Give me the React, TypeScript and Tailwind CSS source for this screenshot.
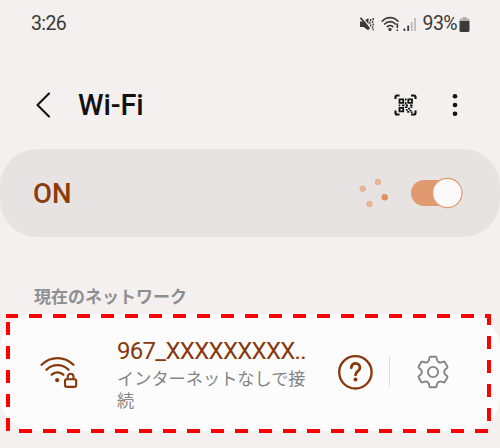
function StatusBar() {
  return (
    <div className="flex h-[48px] items-center pl-[31px] pr-[30px] text-[#3a3a3a]">
      <span className="text-[19.5px] leading-[22px] tracking-[-0.6px]">3:26</span>
      <div className="ml-auto flex items-center">
        {/* Muted, vibrating */}
        <svg className="mr-[6px]" width="16" height="16" viewBox="0 0 16 16" fill="none">
          <path d="M1 5.500h3L9.500 2v12.500L4.500 11H1z" fill="currentColor" />
          <path d="M3.200 1.500l7.500 9" stroke="#f3f0ef" strokeWidth="1.300" />
          <path d="M1.500 1.800l9 11.200" stroke="currentColor" strokeWidth="1.800" />
          <path d="M11.600 3v2M10.900 5.800v2M11.600 8.600v2M14.200 2v2M13.600 4.800v2M14.200 7.600v2M13.600 10.400v2M14.200 13v1.200" stroke="currentColor" strokeWidth="1.400" />
        </svg>
        <svg className="mr-[4px]" width="18" height="16" viewBox="0 0 18 16" fill="none" stroke="currentColor" strokeWidth="1.700" strokeLinecap="round">
          <path d="M1.200 5.200c4.300-4.700 11.400-4.700 15.700 0M3.700 8c3-3.200 7.700-3.200 10.700 0M6.400 10.700c1.500-1.500 3.800-1.500 5.300 0" />
          <circle cx="9" cy="13.400" r=".8" fill="currentColor" />
          <path d="M16.300 8.200v3M16.300 14v.2" />
        </svg>
        <svg className="mr-[6px]" width="14" height="16" viewBox="0 0 14 16" fill="currentColor">
          <path d="M.5 12.500h1.800V15H.5zM4.300 9.500h1.800V15H4.300z" />
          <path d="M7.900 6h1.700v9H7.900zM11.200 2h1.700v13h-1.700z" opacity=".3" />
        </svg>
        <span className="text-[19.5px] leading-[22px] tracking-[-0.6px]">93%</span>
        <svg className="ml-[2px] mt-px" width="11" height="16" viewBox="0 0 11 16" fill="currentColor">
          <path d="M3.500 0h4v1.500H9Q10.500 1.500 10.500 3v1H.5V3Q.5 1.500 2 1.500h1.500z" opacity=".35" />
          <path d="M.5 4h10v9.500q0 1.500-1.500 1.500H2Q.5 15 .5 13.500z" />
        </svg>
      </div>
    </div>
  );
}

function QrIcon() {
  return (
    <svg width="23" height="22" viewBox="0 0 23 22" fill="none" stroke="currentColor">
      <path d="M1.500 5V3q0-1.500 1.500-1.500h2.500M17 1.500h3q1.500 0 1.500 1.500v2M1.500 16.500v2.500q0 1.500 1.500 1.500h2.500M17 20.500h3q1.500 0 1.500-1.500v-2.500" strokeWidth="2.100" />
      <path d="M5.500 5.300h3.700v3.500H5.500zM14.300 5.300H18v3.500h-3.700zM5.500 13.800h3.700v3.500H5.500z" strokeWidth="1.800" />
      <path d="M11.700 4.500v2M11.700 8v2.500M4.700 11.400h1.600M8 11.400h2.500M12 11.400h2M16 11.400h2.500M11 13.200h2.500M14 14.600h2M16.500 13.200h1.800M11.800 16h2M15.500 16.500h2M13.200 17.900h2M16.700 18.200h1.800" strokeWidth="1.600" />
    </svg>
  );
}

function Header() {
  return (
    <header className="flex h-[101px] items-center pl-[36px] pr-[42px] pt-[12px] text-[#111]">
      <svg width="14" height="26" viewBox="0 0 14 26" fill="none" stroke="currentColor" strokeWidth="2.100" strokeLinecap="round" strokeLinejoin="round">
        <path d="M13 1.500L1.500 13 13 24.500" />
      </svg>
      <h1 className="ml-[28px] mt-px text-[29px] font-medium leading-[34px] tracking-[-0.1px]">Wi-Fi</h1>
      <div className="ml-auto flex items-center gap-[35px]">
        <QrIcon />
        <svg width="6" height="24" viewBox="0 0 6 24" fill="currentColor">
          <circle cx="3" cy="3.200" r="2.300" />
          <circle cx="3" cy="12" r="2.300" />
          <circle cx="3" cy="20.800" r="2.300" />
        </svg>
      </div>
    </header>
  );
}

function WifiToggle() {
  return (
    <div className="flex h-[88px] items-center rounded-[37px] bg-[#e7e3e2] pl-[33px] pr-[37px]">
      <span className="mt-[2px] text-[27.5px] font-medium leading-[32px] text-[#8c3b0c]">ON</span>
      <svg className="ml-auto" width="30" height="30" viewBox="0 0 30 30" fill="#e5b599">
        <circle cx="3.700" cy="10.800" r="3.200" />
        <circle cx="19" cy="4" r="3.200" />
        <circle cx="10.500" cy="26" r="3.200" />
        <circle cx="25.700" cy="19.300" r="3.200" fill="#e08f63" />
      </svg>
      <svg className="ml-[22px]" width="52" height="32" viewBox="0 0 52 32">
        <rect y="3" width="48" height="26" rx="13" fill="#e19a70" />
        <circle cx="36.300" cy="16" r="14.700" fill="#fbfaf9" stroke="#e19a70" strokeWidth="1.200" />
      </svg>
    </div>
  );
}

function WifiLockIcon() {
  return (
    <svg width="38" height="32" viewBox="0 0 38 32" fill="none" stroke="currentColor" strokeWidth="2.300" strokeLinecap="round">
      <path d="M1.600 8.800c9-9 22.800-9 31.800 0M6.600 13.700c6.200-6 15.600-6 21.800 0M11.700 18.700c3.300-3.200 8.300-3.200 11.600 0" />
      <circle cx="17.200" cy="24.200" r="2.100" fill="currentColor" stroke="none" />
      <rect x="25" y="23.200" width="11.200" height="7.700" rx="1.800" strokeWidth="2.100" />
      <path d="M27.700 22.800v-2.100a2.900 2.900 0 0 1 5.800 0v2.100" strokeWidth="2.100" />
    </svg>
  );
}

function GearIcon() {
  return (
    <svg width="32" height="34" viewBox="0 0 32 34" fill="none" stroke="currentColor" strokeWidth="1.900" strokeLinejoin="round">
      <path d="M13.300 1.700h5.400q.7 0 .8.700l.6 2.800q.3 1.100 1.400 1.700l.3.200q1.100.7 2.300.3l2.500-.8q.7-.2 1.100.4l2.700 4.600q.3.600-.2 1.100l-1.900 1.800q-1.200 1.100-1.200 2.500t1.200 2.500l1.900 1.800q.5.500.2 1.100l-2.700 4.600q-.4.600-1.100.4l-2.500-.8q-1.200-.4-2.300.3l-.3.200q-1.100.6-1.400 1.700l-.6 2.800q-.1.700-.8.700h-5.400q-.7 0-.8-.7l-.6-2.800q-.3-1.100-1.400-1.700l-.3-.2q-1.100-.7-2.300-.3l-2.500.8q-.7.200-1.100-.4l-2.700-4.600q-.3-.6.200-1.100l1.900-1.800q1.200-1.100 1.200-2.500t-1.200-2.500l-1.900-1.800q-.5-.5-.2-1.100l2.700-4.600q.4-.6 1.100-.4l2.500.8q1.200.4 2.300-.3l.3-.2q1.100-.6 1.400-1.700l.6-2.800q.1-.7.800-.7z" />
      <circle cx="16" cy="17" r="5.100" />
    </svg>
  );
}

function NetworkCard() {
  return (
    <div className="relative">
      <div className="flex h-[117px] rounded-[34px] bg-[#fcfcfc]">
        <div className="ml-[40px] mt-[42px] w-[77px] text-[#86380c]">
          <WifiLockIcon />
        </div>
        <div className="mt-[21px] w-[200px]">
          <div className="whitespace-nowrap text-[24px] leading-[32px] tracking-[-0.7px] text-[#86380c]">967_XXXXXXXXX..</div>
          <div className="mt-px w-[192px] text-[17.200px] leading-[22px] text-[#858585]">
            インターネットなしで接
            <br />
            続
          </div>
        </div>
        <div className="flex h-[115px] items-center">
          <svg className="ml-[20px] text-[#86380c]" width="36" height="36" viewBox="0 0 36 36" fill="none" stroke="currentColor" strokeLinecap="round">
            <circle cx="18.400" cy="18.300" r="16.200" strokeWidth="2.300" />
            <path d="M14.300 13.700c0-5.800 8.600-5.600 8.600 0 0 3.800-4.400 3.600-4.400 7.200" strokeWidth="2.800" />
            <circle cx="18.500" cy="25.600" r="2" fill="currentColor" stroke="none" />
          </svg>
          <div className="ml-[16px] h-[31px] w-px bg-[#dedede]" />
          <div className="ml-[27px] text-[#858585]">
            <GearIcon />
          </div>
        </div>
      </div>
      {/* Highlight frame over the card */}
      <svg className="absolute left-0 top-0" width="500" height="120" viewBox="0 0 500 120" fill="none">
        <path d="M6 2H489V117H8V2" stroke="#fe0000" strokeWidth="4" strokeDasharray="13 11" strokeDashoffset="1" />
      </svg>
    </div>
  );
}

export default function App() {
  return (
    <main className="h-[448px] w-[500px] overflow-hidden bg-[#f3f0ef] font-['Roboto','Noto_Sans_CJK_JP',sans-serif]">
      <StatusBar />
      <Header />
      <WifiToggle />
      <h2 className="mt-[46px] h-[31px] pl-[34px] text-[17px] font-bold leading-[28px] text-[#8f8f8f]">現在のネットワーク</h2>
      <NetworkCard />
    </main>
  );
}
